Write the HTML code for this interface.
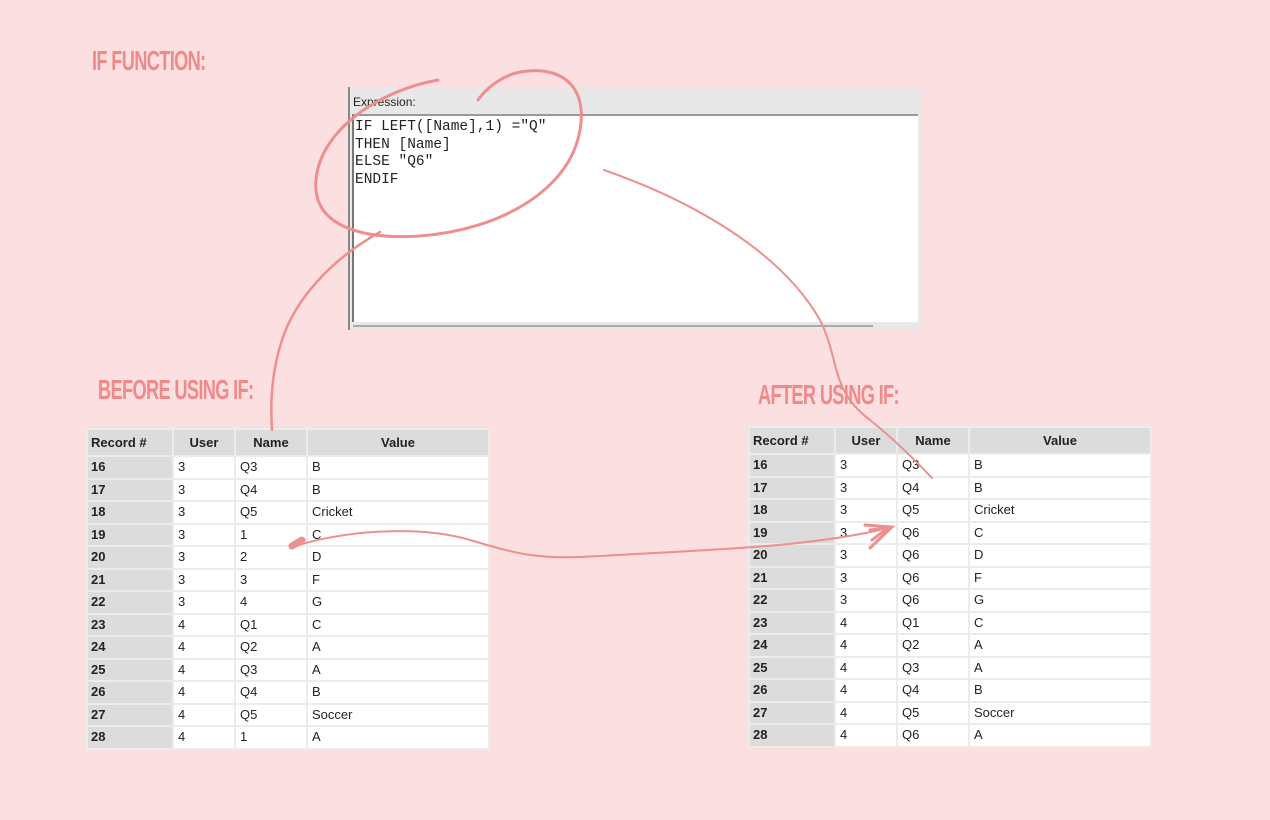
<!DOCTYPE html>
<html><head><meta charset="utf-8"><style>
body{margin:0;width:1270px;height:820px;background:#fcdfe0;position:relative;overflow:hidden;font-family:"Liberation Sans",sans-serif}
.t{position:absolute;color:#f08a8a;font-family:"Liberation Sans Narrow","Liberation Sans",sans-serif;font-weight:bold;font-size:28px;letter-spacing:-1px;transform-origin:left top;transform:scaleX(.65);white-space:nowrap}
table{position:absolute;border-collapse:separate;border-spacing:2px;background:#ececec;font-size:13px;color:#222}
td{height:20.5px;padding:0 0 0 4px;background:#fff;line-height:20px}
td.r{background:#dcdcdc;font-weight:bold;padding-left:3px}
th{background:#dcdcdc;height:23px;font-weight:bold;font-size:13px;text-align:center}
th.r{text-align:left;padding-left:3px}
</style></head><body>
<div class="t" style="left:92px;top:45px">IF FUNCTION:</div>
<div class="t" style="left:98px;top:374px">BEFORE USING IF:</div>
<div class="t" style="left:758px;top:379px">AFTER USING IF:</div>

<div style="position:absolute;left:348px;top:87px;width:574px;height:243px;background:#e8e8e8">
 <div style="position:absolute;left:0;top:0;width:2px;height:243px;background:#888"></div>
 <div style="position:absolute;left:5px;top:8px;font-size:12px;color:#222">Expression:</div>
 <div style="position:absolute;left:4px;top:27px;width:566px;height:208px;background:#fff;border-top:2px solid #999;border-left:2px solid #777;box-sizing:border-box"></div>
 <pre style="position:absolute;left:7px;top:32px;margin:0;font-family:'Liberation Mono',monospace;font-size:14.5px;line-height:17.5px;color:#222">IF LEFT([Name],1) ="Q"
THEN [Name]
ELSE "Q6"
ENDIF</pre>
 <div style="position:absolute;left:5px;top:238px;width:520px;height:2px;background:#aaa"></div>
</div>

<table style="left:86px;top:428px">
<tr><th class="r" style="width:80px">Record #</th><th style="width:58px">User</th><th style="width:68px">Name</th><th style="width:178px">Value</th></tr>
<tr><td class="r">16</td><td>3</td><td>Q3</td><td>B</td></tr>
<tr><td class="r">17</td><td>3</td><td>Q4</td><td>B</td></tr>
<tr><td class="r">18</td><td>3</td><td>Q5</td><td>Cricket</td></tr>
<tr><td class="r">19</td><td>3</td><td>1</td><td>C</td></tr>
<tr><td class="r">20</td><td>3</td><td>2</td><td>D</td></tr>
<tr><td class="r">21</td><td>3</td><td>3</td><td>F</td></tr>
<tr><td class="r">22</td><td>3</td><td>4</td><td>G</td></tr>
<tr><td class="r">23</td><td>4</td><td>Q1</td><td>C</td></tr>
<tr><td class="r">24</td><td>4</td><td>Q2</td><td>A</td></tr>
<tr><td class="r">25</td><td>4</td><td>Q3</td><td>A</td></tr>
<tr><td class="r">26</td><td>4</td><td>Q4</td><td>B</td></tr>
<tr><td class="r">27</td><td>4</td><td>Q5</td><td>Soccer</td></tr>
<tr><td class="r">28</td><td>4</td><td>1</td><td>A</td></tr>
</table>

<table style="left:748px;top:426px">
<tr><th class="r" style="width:80px">Record #</th><th style="width:58px">User</th><th style="width:68px">Name</th><th style="width:178px">Value</th></tr>
<tr><td class="r">16</td><td>3</td><td>Q3</td><td>B</td></tr>
<tr><td class="r">17</td><td>3</td><td>Q4</td><td>B</td></tr>
<tr><td class="r">18</td><td>3</td><td>Q5</td><td>Cricket</td></tr>
<tr><td class="r">19</td><td>3</td><td>Q6</td><td>C</td></tr>
<tr><td class="r">20</td><td>3</td><td>Q6</td><td>D</td></tr>
<tr><td class="r">21</td><td>3</td><td>Q6</td><td>F</td></tr>
<tr><td class="r">22</td><td>3</td><td>Q6</td><td>G</td></tr>
<tr><td class="r">23</td><td>4</td><td>Q1</td><td>C</td></tr>
<tr><td class="r">24</td><td>4</td><td>Q2</td><td>A</td></tr>
<tr><td class="r">25</td><td>4</td><td>Q3</td><td>A</td></tr>
<tr><td class="r">26</td><td>4</td><td>Q4</td><td>B</td></tr>
<tr><td class="r">27</td><td>4</td><td>Q5</td><td>Soccer</td></tr>
<tr><td class="r">28</td><td>4</td><td>Q6</td><td>A</td></tr>
</table>

<svg width="1270" height="820" style="position:absolute;left:0;top:0" fill="none" stroke="#ee8f8f" stroke-linecap="round">
<path d="M438 80 C380 90 320 130 316 180 C312 225 360 240 420 236 C500 230 570 190 580 130 C588 85 560 65 520 72 C500 76 485 90 478 100" stroke-width="3"/>
<path d="M380 232 C330 260 295 300 282 340 C272 370 270 400 272 430" stroke-width="2.5"/>
<path d="M604 170 C690 200 780 250 820 320 C840 360 830 390 870 420 C895 440 915 460 932 478" stroke-width="2"/>
<path d="M290 548 C340 530 420 525 470 540 C520 555 540 560 600 556 C700 550 800 548 880 530" stroke-width="2"/>
<path d="M292 546 L302 540" stroke-width="7"/>
<path d="M865 525 L892 527 L870 548 M870 530 L888 528 L872 540" stroke-width="3"/>
</svg>
</body></html>
